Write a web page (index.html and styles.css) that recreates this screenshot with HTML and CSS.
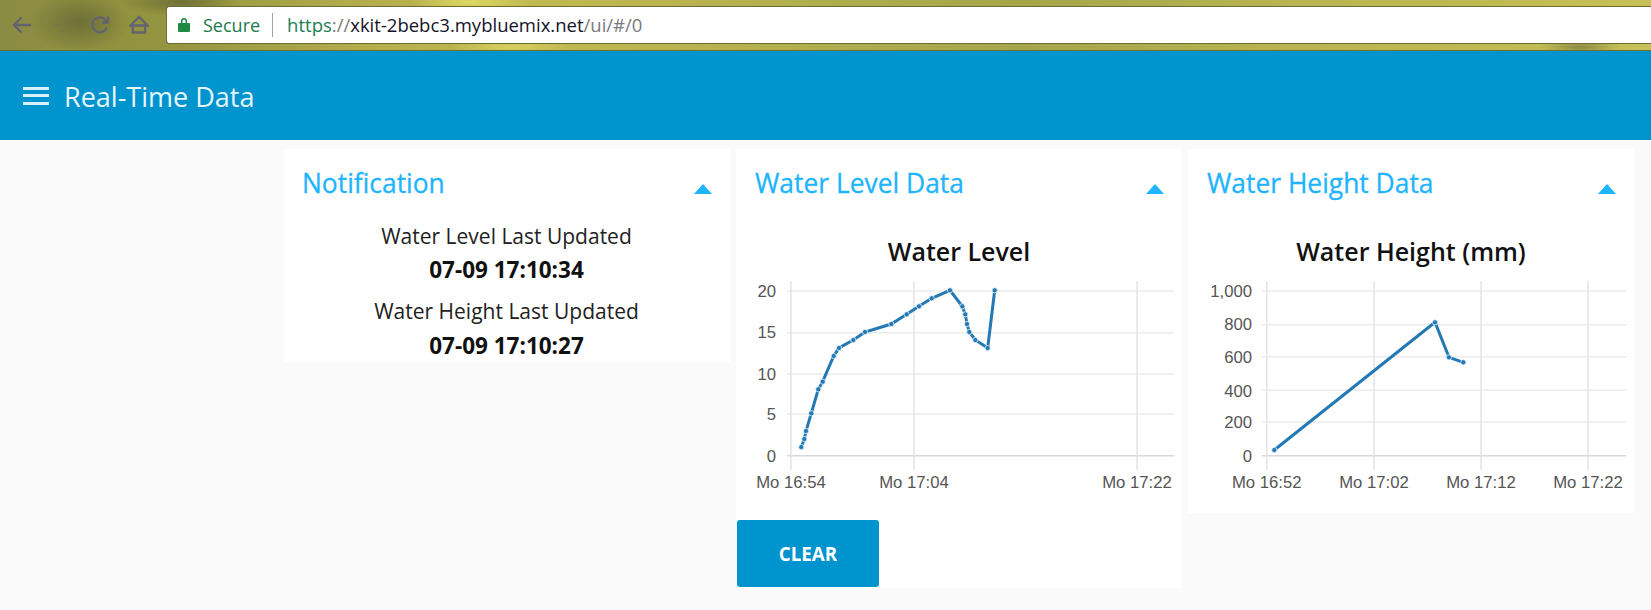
FILE: index.html
```html
<!DOCTYPE html>
<html lang="en">
<head>
    <meta charset="UTF-8">
    <title>Real-Time Data</title>
    <link rel="stylesheet" href="styles.css">
</head>
<body>
    <div class="browser-bar">
        <div class="nav-icons">
            <svg class="nav-icon" width="20" height="20" viewBox="0 0 20 20"><path d="M19 10H2M9.500 2.500L2 10l7.500 7.500"/></svg>
            <svg class="nav-icon nav-disabled" width="20" height="20" viewBox="0 0 20 20"><path d="M1 10h17M10.500 2.500L18 10l-7.500 7.500"/></svg>
            <svg class="nav-icon" width="20" height="20" viewBox="0 0 20 20"><path d="M16.800 12.500A7.500 7.500 0 1 1 15.300 4.700L17.500 7M18 1.500V7.500H12"/></svg>
            <svg class="nav-icon" width="20" height="20" viewBox="0 0 20 20"><path d="M3.800 10.500v7h12.400v-7M1.500 10.500L10 2l8.500 8.500z"/></svg>
        </div>
        <div class="address-bar">
            <svg class="lock" width="12" height="15" viewBox="0 0 12 15"><path d="M1 6h10a1 1 0 0 1 1 1v7a1 1 0 0 1-1 1H1a1 1 0 0 1-1-1V7a1 1 0 0 1 1-1zM3 6V4a3 3 0 0 1 6 0v2H7.500V4a1.500 1.500 0 0 0-3 0v2z"/></svg>
            <span class="secure">Secure</span>
            <span class="addr-divider"></span>
            <span class="url"><span class="url-green">https</span><span class="url-gray">://</span>xkit-2bebc3.mybluemix.net<span class="url-gray">/ui/#/0</span></span>
        </div>
    </div>

    <header class="app-header">
        <div class="hamburger"><span></span><span></span><span></span></div>
        <h1>Real-Time Data</h1>
    </header>

    <main class="cards">
        <section class="card card-notify">
            <div class="card-head">
                <h2>Notification</h2>
                <span class="caret"></span>
            </div>
            <p class="note">Water Level Last Updated</p>
            <p class="stamp">07-09 17:10:34</p>
            <p class="note note-second">Water Height Last Updated</p>
            <p class="stamp">07-09 17:10:27</p>
        </section>

        <section class="card card-level">
            <div class="card-head">
                <h2>Water Level Data</h2>
                <span class="caret"></span>
            </div>
            <h3 class="chart-title">Water Level</h3>
            <svg class="chart" width="446" height="220" viewBox="736 276 446 220">
                <g class="grid">
                    <path d="M787 291H1174M787 332.700H1174M787 374H1174M787 414H1174"/>
                    <path class="grid-axis" d="M787 455.700H1174"/>
                    <path class="grid-v" d="M791 281V470M914 281V470M1137 281V470"/>
                </g>
                <g class="labels-y">
                    <text x="776" y="297">20</text>
                    <text x="776" y="338">15</text>
                    <text x="776" y="380">10</text>
                    <text x="776" y="420">5</text>
                    <text x="776" y="462">0</text>
                </g>
                <g class="labels-x">
                    <text x="791" y="488">Mo 16:54</text>
                    <text x="914" y="488">Mo 17:04</text>
                    <text x="1137" y="488">Mo 17:22</text>
                </g>
                <polyline class="line" points="801.300,447 804.300,439 806,431 811.300,413.300 818.300,389.300 822.700,381.700 833.700,356 839,348 853.300,340 865,332 891.300,324 906.700,314.300 919,306.300 931.700,298.300 950,290.300 962.300,306.300 965.300,314.300 967,324 969.300,332 975.300,340 987.700,348 994.700,290.300"/>
                <g class="dots">
                    <circle cx="801.300" cy="447" r="2.600"/><circle cx="804.300" cy="439" r="2.600"/><circle cx="806" cy="431" r="2.600"/>
                    <circle cx="811.300" cy="413.300" r="2.600"/><circle cx="818.300" cy="389.300" r="2.600"/><circle cx="822.700" cy="381.700" r="2.600"/>
                    <circle cx="833.700" cy="356" r="2.600"/><circle cx="839" cy="348" r="2.600"/><circle cx="853.300" cy="340" r="2.600"/>
                    <circle cx="865" cy="332" r="2.600"/><circle cx="891.300" cy="324" r="2.600"/><circle cx="906.700" cy="314.300" r="2.600"/>
                    <circle cx="919" cy="306.300" r="2.600"/><circle cx="931.700" cy="298.300" r="2.600"/><circle cx="950" cy="290.300" r="2.600"/>
                    <circle cx="962.300" cy="306.300" r="2.600"/><circle cx="965.300" cy="314.300" r="2.600"/><circle cx="967" cy="324" r="2.600"/>
                    <circle cx="969.300" cy="332" r="2.600"/><circle cx="975.300" cy="340" r="2.600"/><circle cx="987.700" cy="348" r="2.600"/>
                    <circle cx="994.700" cy="290.300" r="2.600"/>
                </g>
            </svg>
            <button class="clear-btn" type="button">CLEAR</button>
        </section>

        <section class="card card-height">
            <div class="card-head">
                <h2>Water Height Data</h2>
                <span class="caret"></span>
            </div>
            <h3 class="chart-title">Water Height (mm)</h3>
            <svg class="chart" width="446" height="220" viewBox="1188 276 446 220">
                <g class="grid">
                    <path d="M1262 291H1626M1262 324.700H1626M1262 356.700H1626M1262 390.300H1626M1262 422H1626"/>
                    <path class="grid-axis" d="M1262 455.700H1626"/>
                    <path class="grid-v" d="M1266.700 281V470M1374 281V470M1481 281V470M1588 281V470"/>
                </g>
                <g class="labels-y">
                    <text x="1252" y="297">1,000</text>
                    <text x="1252" y="330">800</text>
                    <text x="1252" y="363">600</text>
                    <text x="1252" y="397">400</text>
                    <text x="1252" y="428">200</text>
                    <text x="1252" y="462">0</text>
                </g>
                <g class="labels-x">
                    <text x="1266.700" y="488">Mo 16:52</text>
                    <text x="1374" y="488">Mo 17:02</text>
                    <text x="1481" y="488">Mo 17:12</text>
                    <text x="1588" y="488">Mo 17:22</text>
                </g>
                <polyline class="line" points="1274.300,450 1435,322.300 1449,357.300 1463.300,362.300"/>
                <g class="dots">
                    <circle cx="1274.300" cy="450" r="2.600"/><circle cx="1435" cy="322.300" r="2.600"/>
                    <circle cx="1449" cy="357.300" r="2.600"/><circle cx="1463.300" cy="362.300" r="2.600"/>
                </g>
            </svg>
        </section>
    </main>
</body>
</html>
```

FILE: styles.css
```css
html, body {
    margin: 0;
    height: 610px;
    overflow: hidden;
}

body {
    background-color: #fafafa;
    font-family: "Open Sans", "Noto Sans", sans-serif;
    color: #111;
}

/* browser chrome */
.browser-bar {
    display: flex;
    align-items: center;
    height: 51px;
    box-sizing: border-box;
    padding: 6px 0 7px 0;
    background:
        radial-gradient(ellipse 60px 14px at 180px 2px, #6f7035 0%, rgba(111, 112, 53, 0) 100%),
        radial-gradient(ellipse 50px 30px at 80px 22px, #6e6f36 0%, rgba(110, 111, 54, 0) 100%),
        radial-gradient(ellipse 60px 12px at 470px 2px, #e0d862 0%, rgba(224, 216, 98, 0) 100%),
        radial-gradient(ellipse 60px 8px at 510px 47px, #d8d05c 0%, rgba(216, 208, 92, 0) 100%),
        radial-gradient(ellipse 40px 8px at 1580px 47px, #8c8a45 0%, rgba(140, 138, 69, 0) 100%),
        linear-gradient(90deg, #8a8b42 0%, #94953f 10%, #b3ad4c 22%, #c2ba50 32%, #b5b14e 45%, #a5a54a 62%, #b8b450 78%, #c5c155 100%);
    border-bottom: 1px solid #6e6f2e;
}

.nav-icons {
    display: flex;
    align-items: center;
    gap: 19px;
    width: 166px;
    padding-left: 12px;
    box-sizing: border-box;
}

.nav-icon {
    fill: none;
    stroke: #626370;
    stroke-width: 2.300;
    flex: none;
}

.nav-disabled {
    opacity: 0.12;
}

.address-bar {
    flex: 1;
    display: flex;
    align-items: center;
    height: 38px;
    box-sizing: border-box;
    padding-left: 11px;
    background-color: #fff;
    border: 1px solid #6b6b3c;
    border-right: none;
    border-radius: 3px 0 0 3px;
}

.lock {
    fill: #1f8a45;
    margin-right: 13px;
}

.secure {
    font-size: 18px;
    color: #1b7a4a;
}

.addr-divider {
    width: 1px;
    height: 24px;
    margin: 0 14px 0 12px;
    background-color: #a3a3a3;
}

.url {
    font-size: 18.500px;
    color: #14142a;
}

.url-green {
    color: #1b7e55;
}

.url-gray {
    color: #7a7a80;
}

/* app header */
.app-header {
    display: flex;
    align-items: center;
    height: 89px;
    padding-left: 23px;
    background-color: #0094ce;
    color: #e6f6fc;
}

.hamburger {
    display: flex;
    flex-direction: column;
    justify-content: space-between;
    width: 26px;
    height: 18px;
    margin-right: 15px;
}

.hamburger span {
    display: block;
    height: 3px;
    background-color: #d8f0f9;
}

.app-header h1 {
    margin: 2px 0 0 0;
    font-size: 27px;
    font-weight: 400;
}

/* cards */
.cards {
    display: grid;
    grid-template-columns: 447px 446px 446px;
    column-gap: 6px;
    align-items: start;
    padding: 9px 0 0 283px;
}

.card {
    background-color: #fff;
    box-sizing: border-box;
}

.card-notify {
    height: 213px;
}

.card-level {
    height: 439px;
}

.card-height {
    height: 364px;
}

.card-head {
    display: flex;
    justify-content: space-between;
    height: 60px;
    padding: 17px 18px 0 19px;
    box-sizing: border-box;
}

.card-head h2 {
    margin: 0;
    font-size: 26.400px;
    line-height: 34px;
    font-weight: 400;
    color: #1eb4ff;
    -webkit-text-stroke: 0.3px #1eb4ff;
}

.caret {
    width: 0;
    height: 0;
    margin-top: 18px;
    border-left: 9px solid transparent;
    border-right: 9px solid transparent;
    border-bottom: 10px solid #1eb4ff;
}

.card-notify .card-head {
    margin-bottom: 13px;
}

.note {
    margin: 0;
    font-size: 21px;
    line-height: 28px;
    text-align: center;
    color: #222;
}

.note-second {
    margin-top: 13px;
}

.stamp {
    margin: 6px 0 0 0;
    font-size: 22.500px;
    line-height: 28px;
    font-weight: 700;
    text-align: center;
}

.note-second + .stamp {
    margin-top: 7px;
}

.chart-title {
    margin: 0;
    padding-top: 22px;
    font-size: 25px;
    line-height: 40px;
    font-weight: 600;
    text-align: center;
    color: #111;
}

.chart {
    display: block;
    margin-top: 5px;
}

.grid path {
    fill: none;
    stroke: #ececec;
    stroke-width: 1.500;
}

.grid .grid-axis {
    stroke: #d8d8d8;
}

.grid .grid-v {
    stroke: #e4e4e4;
}

.labels-y text,
.labels-x text {
    font-family: "Liberation Sans", Arial, sans-serif;
    font-size: 16.700px;
    fill: #555;
}

.labels-y text {
    text-anchor: end;
}

.labels-x text {
    text-anchor: middle;
}

.line {
    fill: none;
    stroke: #2379b5;
    stroke-width: 3;
}

.dots circle {
    fill: #2379b5;
    stroke: #e4f0f7;
    stroke-width: 0.800;
}

.clear-btn {
    display: block;
    width: 142px;
    height: 67px;
    margin: 24px 0 0 1px;
    background-color: #0094ce;
    border: none;
    border-radius: 3px;
    color: #fff;
    font-family: "Open Sans", "Noto Sans", sans-serif;
    font-size: 18.800px;
    font-weight: 700;
    cursor: pointer;
}
```
